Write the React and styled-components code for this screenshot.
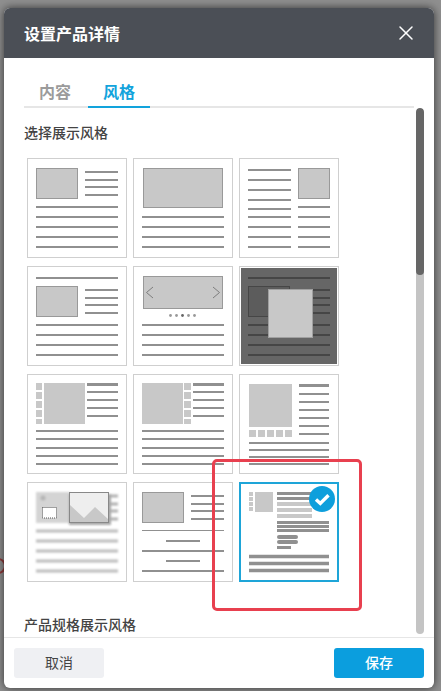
import React from 'react';
import styled, { createGlobalStyle } from 'styled-components';
import { X } from 'lucide-react';

const GlobalStyle = createGlobalStyle`
  html, body {
    margin: 0;
    padding: 0;
    width: 441px;
    height: 691px;
    overflow: hidden;
    background: #8f8f8f;
    font-family: "Noto Sans CJK SC", "Liberation Sans", sans-serif;
  }
`;

const Backdrop = styled.div`
  position: relative;
  width: 441px;
  height: 691px;
  box-sizing: border-box;
  padding: 8px 7px 3px 4px;
  overflow: hidden;
`;
const BehindMark = styled.div`
  position: absolute;
  left: -10px;
  top: 558px;
  width: 12px;
  height: 12px;
  border: 2px solid #8f3a3a;
  border-radius: 50%;
`;
const Modal = styled.div`
  position: relative;
  height: 100%;
  display: flex;
  flex-direction: column;
  background: #fff;
  border-radius: 6px;
  overflow: hidden;
  box-shadow: 0 0 9px rgba(0, 0, 0, 0.65);
`;
const Header = styled.div`
  flex: none;
  height: 50px;
  display: flex;
  align-items: center;
  justify-content: space-between;
  padding: 0 16px 0 20px;
  background: #4b4f56;
`;
const Title = styled.div`
  font-size: 16px;
  font-weight: 700;
  color: #fff;
`;
const CloseBtn = styled.div`
  display: flex;
  color: #fff;
`;
const Tabs = styled.div`
  flex: none;
  height: 50px;
  margin: 0 20px 0 20px;
  display: flex;
  align-items: flex-end;
  gap: 2px;
  border-bottom: 2px solid #e6e6e6;
  box-sizing: border-box;
`;
const Tab = styled.div`
  width: 62px;
  height: 36px;
  box-sizing: border-box;
  margin-bottom: -2px;
  text-align: center;
  font-size: 16px;
  font-weight: 700;
  line-height: 22px;
  padding-top: 8px;
  color: ${({ $active }) => ($active ? '#12a3dc' : '#9b9b9b')};
  border-bottom: 2px solid ${({ $active }) => ($active ? '#12a3dc' : 'transparent')};
`;
const Body = styled.div`
  flex: 1;
  min-height: 0;
  display: flex;
  padding-right: 10px;
`;
const Content = styled.div`
  flex: 1;
  min-width: 0;
  overflow: hidden;
  padding: 14px 0 0 20px;
`;
const SectionTitle = styled.div`
  font-size: 14px;
  font-weight: 500;
  line-height: 20px;
  color: #444;
`;
const Grid = styled.div`
  display: grid;
  grid-template-columns: repeat(3, 100px);
  gap: 8px 6px;
  margin: 16px 0 32px 3px;
`;
const Card = styled.div`
  position: relative;
  width: 100px;
  height: 100px;
  box-sizing: border-box;
  border: 1px solid ${({ $selected }) => ($selected ? '#1ea5d8' : '#cfcfcf')};
  box-shadow: ${({ $selected }) => ($selected ? 'inset 0 0 0 1px #1ea5d8' : 'none')};
  background: #fff;
  svg {
    display: block;
  }
`;
const CheckBadge = styled.svg`
  position: absolute;
  right: 3px;
  top: 3px;
`;
const Scrollbar = styled.div`
  flex: none;
  width: 8px;
  height: 526px;
  border-radius: 4px;
  background: #c4c4c4;
  overflow: hidden;
`;
const ScrollThumb = styled.div`
  height: 167px;
  border-radius: 4px;
  background: #666;
`;
const Footer = styled.div`
  flex: none;
  height: 51px;
  display: flex;
  justify-content: space-between;
  align-items: flex-start;
  padding: 10px 10px 0 10px;
  border-top: 1px solid #e6e6e6;
  box-sizing: border-box;
`;
const Button = styled.div`
  width: 90px;
  height: 30px;
  padding-bottom: 2px;
  box-sizing: border-box;
  border-radius: 3px;
  display: flex;
  align-items: center;
  justify-content: center;
  font-size: 14px;
  font-weight: ${({ $primary }) => ($primary ? 500 : 400)};
  color: ${({ $primary }) => ($primary ? '#fff' : '#444')};
  background: ${({ $primary }) => ($primary ? '#0b9ede' : '#eff0f3')};
`;
const Annotation = styled.div`
  position: absolute;
  left: 208px;
  top: 451px;
  width: 150px;
  height: 152px;
  box-sizing: border-box;
  border: 3px solid #e8404f;
  border-radius: 5px;
  pointer-events: none;
`;
const Blurred = styled.g`
  filter: blur(1.3px);
`;

const LINE = '#909090';
const IMG = '#c8c8c8';
const IMG_EDGE = '#999';

const Line = ({ x1 = 9, x2 = 91, y, h = 2, fill = LINE, r = 0 }) => (
  <rect x={x1} y={y - h / 2} width={x2 - x1} height={h} fill={fill} rx={r} />
);
const Lines = ({ ys, ...rest }) => ys.map((y) => <Line key={y} y={y} {...rest} />);
const Pic = ({ x, y, w, h, fill = IMG, stroke = IMG_EDGE }) => (
  <rect x={x + 0.5} y={y + 0.5} width={w - 1} height={h - 1} fill={fill} stroke={stroke} />
);
const Block = ({ x, y, w, h, fill = IMG }) => <rect x={x} y={y} width={w} height={h} fill={fill} />;

const SIDE_THUMBS = [[9, 7], [18, 7], [27, 7], [36, 7], [45, 5]];

const thumbs = [
  <>
    <Pic x={9} y={10} w={42} h={31} />
    <Lines x1={58} ys={[14, 22, 29, 37]} />
    <Lines ys={[49, 59, 69, 79, 89]} />
  </>,
  <>
    <Pic x={10} y={10} w={80} h={40} />
    <Lines ys={[59, 69, 79, 89]} />
  </>,
  <>
    <Lines x2={52} ys={[12, 22, 32, 42, 51, 59, 69, 79, 89]} />
    <Pic x={59} y={10} w={32} h={31} />
    <Lines x1={59} ys={[49, 59, 69, 79, 89]} />
  </>,
  <>
    <Line y={12} />
    <Pic x={9} y={20} w={42} h={31} />
    <Lines x1={58} ys={[24, 32, 39, 47]} />
    <Lines ys={[59, 69, 79, 89]} />
  </>,
  <>
    <Pic x={10} y={10} w={80} h={33} />
    <path d="M20 21 L13.5 26.5 L20 32 M80 21 L86.5 26.5 L80 32" fill="none" stroke="#7d7d7d" strokeWidth="1" />
    {[37.5, 43.5, 49.5, 55.5, 61.5].map((cx, i) => (
      <circle key={cx} cx={cx} cy={49.5} r={1.4} fill={i === 2 ? '#666' : '#999'} />
    ))}
    <Lines ys={[59, 69, 79, 89]} />
  </>,
  <>
    <rect x={2} y={2} width={96} height={96} fill="#666" />
    <Line y={12} fill="#464646" />
    <Pic x={9} y={20} w={42} h={31} fill="#5c5c5c" stroke="#464646" />
    <Lines x1={58} fill="#464646" ys={[24, 32, 39, 47]} />
    <Lines fill="#464646" ys={[59, 69, 79, 89]} />
    <Pic x={29} y={23} w={45} h={49} stroke="#a0a0a0" />
  </>,
  <>
    {SIDE_THUMBS.map(([y, h]) => <Block key={y} x={9} y={y} w={6} h={h} />)}
    <Block x={17} y={9} w={41} h={41} />
    <Line x1={60} y={10.5} h={3} />
    <Lines x1={60} ys={[18, 26, 34, 42]} />
    <Lines ys={[57, 65, 74, 82, 90]} />
  </>,
  <>
    <Block x={9} y={9} w={41} h={41} />
    {SIDE_THUMBS.map(([y, h]) => <Block key={y} x={51} y={y} w={7} h={h} />)}
    <Line x1={60} y={10.5} h={3} />
    <Lines x1={60} ys={[18, 26, 34, 42]} />
    <Lines ys={[57, 65, 74, 82, 90]} />
  </>,
  <>
    <Block x={10} y={10} w={43} h={43} />
    {[10, 19, 28, 37, 46].map((x) => <Block key={x} x={x} y={56} w={7} h={7} />)}
    <Line x1={60} x2={90} y={11.5} h={3} />
    <Lines x1={60} x2={90} ys={[20, 28, 36, 44, 52, 60]} />
    <Lines x1={10} x2={90} ys={[69, 76, 83, 90]} />
  </>,
  <>
    <Blurred>
      <Block x={9} y={10} w={34} h={31} fill="#d4d4d4" />
      <circle cx={16} cy={16} r={2.5} fill="#b4b4b4" />
      <Lines x1={70} fill="#b0b0b0" h={3} ys={[14, 22, 29, 37]} />
      <Lines fill="#bcbcbc" h={3} ys={[49, 59, 69, 79, 89]} />
      <rect x={42} y={12} width={42} height={31} fill="#a8a8a8" />
    </Blurred>
    <rect x={15.5} y={25.5} width={14} height={10.5} fill="#fff" stroke="#555" strokeDasharray="1 1" />
    <Pic x={42} y={10} w={40} h={31} fill="#eeeeee" stroke="#888" />
    <path d="M43 23 L57 36 L68 25 L81 37 L81 40 L43 40 Z" fill={IMG} />
  </>,
  <>
    <Pic x={9} y={10} w={42} h={31} />
    <Lines x1={58} ys={[14, 22, 29, 37]} />
    <Line y={48.5} h={1} />
    <Lines x1={33} x2={67} ys={[59, 79]} />
    <Lines ys={[69, 89]} />
  </>,
  <>
    {[10, 15, 20, 25].map((y) => <Block key={y} x={10} y={y} w={4} h={4} />)}
    <Block x={16} y={10} w={18} h={20} />
    <Line x1={38} x2={72} y={11.5} h={3} />
    <Line x1={38} x2={72} y={16.5} h={3} />
    {[22, 28, 34].map((y) => <Line key={y} x1={38} x2={73} y={y} h={4} fill={IMG} />)}
    {[40.5, 44.5, 48.5].map((y) => <Line key={y} x1={38} x2={90} y={y} h={3} />)}
    <Line x1={38} x2={59} y={55} h={4} r={2} />
    <Line x1={38} x2={59} y={60} h={4} r={2} />
    <Line x1={38} x2={52} y={65.5} h={3} />
    {[74.5, 81.5, 88.5].map((y) => <Line key={y} x1={10} x2={90} y={y} h={3.5} />)}
  </>,
];

const SELECTED_INDEX = 11;

const App = () => (
  <>
    <GlobalStyle />
    <Backdrop>
      <BehindMark />
      <Modal>
        <Header>
          <Title>设置产品详情</Title>
          <CloseBtn><X size={24} strokeWidth={1.5} /></CloseBtn>
        </Header>
        <Tabs>
          <Tab>内容</Tab>
          <Tab $active>风格</Tab>
        </Tabs>
        <Body>
          <Content>
            <SectionTitle>选择展示风格</SectionTitle>
            <Grid>
              {thumbs.map((thumb, i) => (
                <Card key={i} $selected={i === SELECTED_INDEX}>
                  <svg width="98" height="98" viewBox="1 1 98 98">{thumb}</svg>
                  {i === SELECTED_INDEX && (
                    <CheckBadge width="26" height="26" viewBox="0 0 26 26">
                      <circle cx="13" cy="13" r="13" fill="#0e9fdc" />
                      <path d="M7 13.5 L11.3 17.5 L19.5 9.2" fill="none" stroke="#fff" strokeWidth="3.4" />
                    </CheckBadge>
                  )}
                </Card>
              ))}
            </Grid>
            <SectionTitle>产品规格展示风格</SectionTitle>
          </Content>
          <Scrollbar><ScrollThumb /></Scrollbar>
        </Body>
        <Footer>
          <Button>取消</Button>
          <Button $primary>保存</Button>
        </Footer>
        <Annotation />
      </Modal>
    </Backdrop>
  </>
);

export default App;
